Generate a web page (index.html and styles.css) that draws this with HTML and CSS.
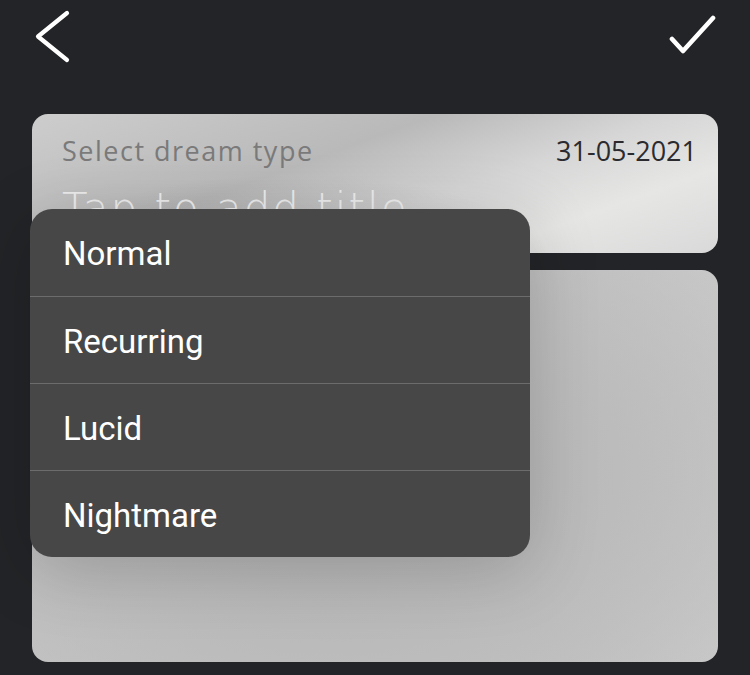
FILE: index.html
```html
<!DOCTYPE html>
<html lang="en">
<head>
  <meta charset="UTF-8">
  <title>New dream</title>
  <link rel="stylesheet" href="styles.css">
</head>
<body>

  <header class="topbar">
    <svg class="back-icon" width="40" height="56" viewBox="0 0 40 56">
      <path d="M33 4 L4 27.5 L33 51" fill="none" stroke="#fff" stroke-width="4.2" stroke-linecap="round" stroke-linejoin="round"/>
    </svg>
    <svg class="check-icon" width="54" height="44" viewBox="0 0 54 44">
      <path d="M6 29 L17 41 L47 8" fill="none" stroke="#fff" stroke-width="4.6" stroke-linecap="round" stroke-linejoin="round"/>
    </svg>
  </header>

  <main class="editor">
    <div class="title-card">
      <div class="title-row">
        <span class="dream-type">Select dream type</span>
        <span class="dream-date">31-05-2021</span>
      </div>
      <div class="title-input">Tap to add title</div>
    </div>

    <div class="body-card"></div>

    <ul class="type-menu">
      <li>Normal</li>
      <li>Recurring</li>
      <li>Lucid</li>
      <li>Nightmare</li>
    </ul>
  </main>

</body>
</html>
```

FILE: styles.css
```css
body {
  margin: 0;
  background: #232427;
  font-family: "Open Sans", sans-serif;
  width: 750px;
  height: 675px;
  overflow: hidden;
}

.topbar {
  display: flex;
  justify-content: space-between;
  align-items: flex-start;
  height: 114px;
  padding: 0 30px 0 34px;
  box-sizing: border-box;
}

.back-icon {
  margin-top: 9px;
}

.check-icon {
  margin-top: 10px;
}

.editor {
  position: relative;
  padding: 0 32px;
  display: flex;
  flex-direction: column;
  gap: 17px;
}

.title-card, .body-card {
  border-radius: 16px;
}

.title-card {
  height: 139px;
  box-sizing: border-box;
  padding: 18px 21px 0 30px;
  overflow: hidden;
  background:
    radial-gradient(ellipse 260px 90px at 260px 150px, rgba(0,0,0,0.14), rgba(0,0,0,0)),
    linear-gradient(160deg, #cdcdcd 0%, #b9b9b9 38%, #d6d6d6 60%, #e6e6e5 78%, #d9d9d9 100%);
}

.title-row {
  display: flex;
  justify-content: space-between;
  align-items: baseline;
}

.dream-type {
  font-size: 27px;
  letter-spacing: 1.5px;
  color: #7a7a7a;
}

.dream-date {
  font-size: 27px;
  color: #2b2b2f;
}

.title-input {
  margin-top: 15px;
  font-family: "DejaVu Sans", sans-serif;
  font-size: 42px;
  font-weight: 200;
  letter-spacing: 2px;
  color: #ececec;
  white-space: nowrap;
}

.body-card {
  height: 392px;
  background:
    radial-gradient(ellipse 520px 360px at 300px 200px, #b2b2b2 0%, #bcbcbc 55%, rgba(196,196,196,0) 100%),
    linear-gradient(90deg, #c6c6c6, #c3c3c3 60%, #cacaca);
}

.type-menu {
  position: absolute;
  left: 30px;
  top: 95px;
  width: 500px;
  margin: 0;
  padding: 0;
  list-style: none;
  background: #474747;
  border-radius: 22px;
  box-shadow: 0 14px 70px rgba(0,0,0,0.18);
  overflow: hidden;
}

.type-menu li {
  height: 87px;
  box-sizing: border-box;
  padding: 26px 0 0 33px;
  font-family: Roboto, sans-serif;
  font-size: 33px;
  line-height: 1.15;
  color: #fff;
  border-top: 1px solid #6c6c6c;
}

.type-menu li:first-child {
  border-top: none;
}
```
